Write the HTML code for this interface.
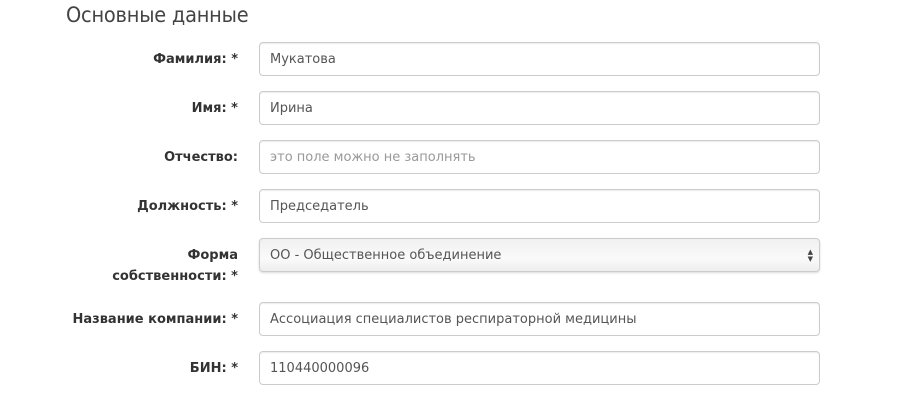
<!DOCTYPE html>
<html><head><style>
body{margin:0;width:920px;height:401px;background:#fff;font-family:"DejaVu Sans","Liberation Sans",sans-serif;position:relative;overflow:hidden}
h2{position:absolute;left:66px;top:3px;margin:0;font-weight:normal;font-size:21.5px;color:#444;font-family:"DejaVu Sans",sans-serif;font-stretch:condensed;letter-spacing:-0.2px}
.l{position:absolute;right:682px;font-weight:bold;font-size:13px;color:#333;text-align:right;line-height:21px}
.i{position:absolute;left:259px;border:1px solid #ccc;border-radius:4px;box-shadow:inset 0 1px 1px rgba(0,0,0,.075);font-size:13px;color:#555;line-height:33px;padding-left:10px;box-sizing:border-box;width:561px;height:34px}
.ph{color:#999}
.s{background:linear-gradient(#f0f0f0,#fafafa 60%,#eee);box-shadow:0 1px 2px rgba(0,0,0,.15)}
.ar{position:absolute;right:6px;top:10px;font-size:7px;line-height:7px;color:#444}
</style></head><body>
<h2>Основные данные</h2>
<div class="l" style="top:49px">Фамилия: *</div><div class="i" style="top:42px">Мукатова</div>
<div class="l" style="top:98px">Имя: *</div><div class="i" style="top:91px">Ирина</div>
<div class="l" style="top:147px">Отчество:</div><div class="i ph" style="top:140px">это поле можно не заполнять</div>
<div class="l" style="top:196px">Должность: *</div><div class="i" style="top:189px">Председатель</div>
<div class="l" style="top:245px">Форма<br>собственности: *</div><div class="i s" style="top:238px">ОО - Общественное объединение<div class="ar">▲<br>▼</div></div>
<div class="l" style="top:309px">Название компании: *</div><div class="i" style="top:302px">Ассоциация специалистов респираторной медицины</div>
<div class="l" style="top:358px">БИН: *</div><div class="i" style="top:351px">110440000096</div>
</body></html>
